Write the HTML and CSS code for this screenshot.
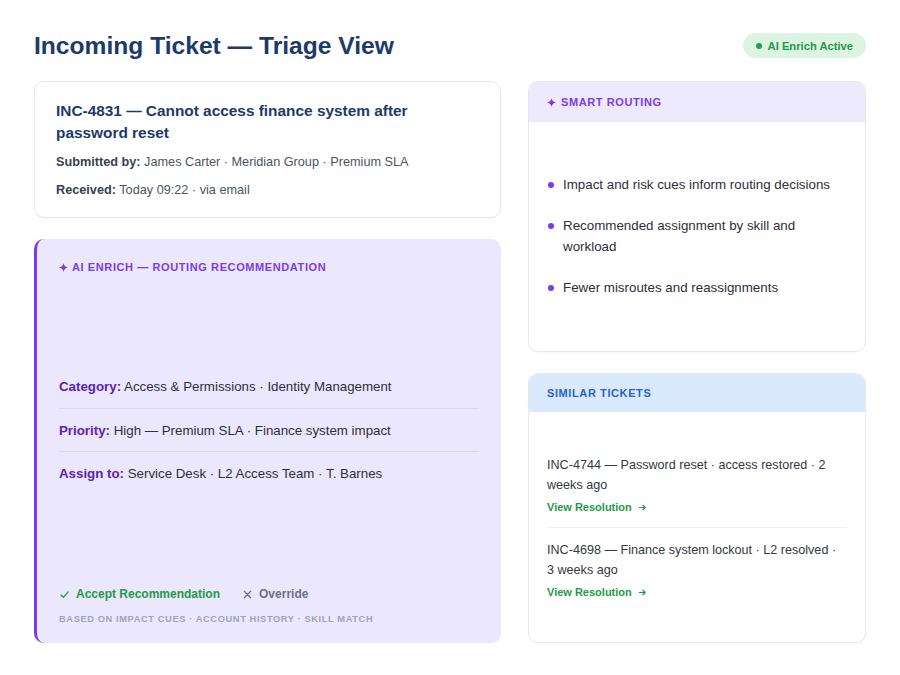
FILE: index.html
```html
<!DOCTYPE html>
<html lang="en">
<head>
    <meta charset="UTF-8">
    <meta name="viewport" content="width=device-width, initial-scale=1.0">
    <title>Incoming Ticket — Triage View</title>
    <link rel="stylesheet" href="styles.css">
</head>
<body>
    <div class="page">
        <header class="top">
            <h1>Incoming Ticket — Triage View</h1>
            <span class="badge"><span class="dot"></span>AI Enrich Active</span>
        </header>

        <div class="grid">
            <div class="col">
                <div class="card ticket">
                    <h2>INC-4831 — Cannot access finance system after password reset</h2>
                    <p class="meta"><strong>Submitted by:</strong> James Carter · Meridian Group · Premium SLA</p>
                    <p class="meta"><strong>Received:</strong> Today 09:22 · via email</p>
                </div>

                <div class="card enrich">
                    <div class="eyebrow purple">
                        <svg class="spark" viewBox="0 0 10 10"><path d="M5 0 Q5.6 4.4 10 5 Q5.6 5.6 5 10 Q4.4 5.6 0 5 Q4.4 4.4 5 0Z"/></svg>
                        AI Enrich — Routing Recommendation
                    </div>

                    <div class="rows">
                        <div class="row"><b>Category:</b> Access &amp; Permissions · Identity Management</div>
                        <div class="row"><b>Priority:</b> High — Premium SLA · Finance system impact</div>
                        <div class="row"><b>Assign to:</b> Service Desk · L2 Access Team · T. Barnes</div>
                    </div>

                    <div class="foot">
                        <div class="actions">
                            <span class="accept">
                                <svg viewBox="0 0 12 12"><path d="M2 6.5 L4.8 9 L10 3.2"/></svg>
                                Accept Recommendation
                            </span>
                            <span class="override">
                                <svg viewBox="0 0 12 12"><path d="M2.5 2.5 L9.5 9.5 M9.5 2.5 L2.5 9.5"/></svg>
                                Override
                            </span>
                        </div>
                        <div class="basis">Based on impact cues · account history · skill match</div>
                    </div>
                </div>
            </div>

            <div class="col">
                <div class="card side">
                    <div class="side-head routing">
                        <svg class="spark" viewBox="0 0 10 10"><path d="M5 0 Q5.6 4.4 10 5 Q5.6 5.6 5 10 Q4.4 5.6 0 5 Q4.4 4.4 5 0Z"/></svg>
                        Smart Routing
                    </div>
                    <div class="side-body">
                        <ul class="bullets">
                            <li>Impact and risk cues inform routing decisions</li>
                            <li>Recommended assignment by skill and workload</li>
                            <li>Fewer misroutes and reassignments</li>
                        </ul>
                    </div>
                </div>

                <div class="card side">
                    <div class="side-head similar">Similar Tickets</div>
                    <div class="side-body">
                        <div class="similar-list">
                            <div class="sim">
                                <p>INC-4744 — Password reset · access restored · 2 weeks ago</p>
                                <a class="view">View Resolution <svg viewBox="0 0 10 10"><path d="M1.5 5 H8 M5.5 2.5 L8 5 L5.5 7.5"/></svg></a>
                            </div>
                            <div class="sim">
                                <p>INC-4698 — Finance system lockout · L2 resolved · 3 weeks ago</p>
                                <a class="view">View Resolution <svg viewBox="0 0 10 10"><path d="M1.5 5 H8 M5.5 2.5 L8 5 L5.5 7.5"/></svg></a>
                            </div>
                        </div>
                    </div>
                </div>
            </div>
        </div>
    </div>
</body>
</html>
```

FILE: styles.css
```css
* {
    box-sizing: border-box;
}
body {
    margin: 0;
    font-family: "Liberation Sans", Arial, sans-serif;
    background: #ffffff;
    color: #374151;
}
.page {
    height: 675px;
    padding: 30px 34px 32px;
    display: flex;
    flex-direction: column;
}
.top {
    height: 31px;
    margin-bottom: 20px;
    display: flex;
    align-items: center;
    justify-content: space-between;
}
h1 {
    margin: 0;
    font-size: 24.6px;
    line-height: 31px;
    color: #1c3a6c;
    font-weight: 700;
}
.badge {
    display: inline-flex;
    align-items: center;
    gap: 6px;
    height: 25px;
    padding: 0 13px;
    border-radius: 13px;
    background: #dcf5e3;
    color: #1f9a46;
    font-size: 11.2px;
    font-weight: 700;
}
.dot {
    width: 6px;
    height: 6px;
    border-radius: 50%;
    background: #22a04b;
}
.grid {
    flex: 1;
    display: grid;
    grid-template-columns: 467px 1fr;
    column-gap: 27px;
}
.col {
    display: flex;
    flex-direction: column;
    gap: 21px;
}
.card {
    border: 1px solid #e6e8ec;
    border-radius: 10px;
    background: #fff;
    box-shadow: 0 1px 2px rgba(0,0,0,0.03);
}
.ticket {
    padding: 18px 21px 17px;
}
.ticket h2 {
    margin: 0 0 9px;
    font-size: 15.4px;
    line-height: 21.5px;
    color: #1c3a6c;
}
.meta {
    margin: 0;
    font-size: 12.7px;
    line-height: 20px;
    color: #4b5563;
}
.meta + .meta {
    margin-top: 8px;
}
.meta strong {
    color: #374151;
}
.enrich {
    flex: 1;
    border: none;
    border-left: 3px solid #7c3aed;
    background: #ebe7fd;
    padding: 21px 22px 17px;
    display: flex;
    flex-direction: column;
    justify-content: space-between;
}
.eyebrow {
    font-size: 11px;
    line-height: 14px;
    font-weight: 700;
    letter-spacing: 0.6px;
    text-transform: uppercase;
    display: flex;
    align-items: center;
    gap: 4px;
}
.purple {
    color: #7c3aed;
}
.spark {
    width: 9px;
    height: 9px;
    fill: currentColor;
}
.rows {
    margin-top: 1px;
}
.row {
    padding: 11px 0 10.5px;
    font-size: 13.3px;
    line-height: 21px;
    color: #2d2f3a;
}
.row + .row {
    border-top: 1px solid #dcd6f2;
}
.row b {
    color: #5b21b6;
}
.actions {
    display: flex;
    align-items: center;
    gap: 22px;
    font-size: 12px;
    font-weight: 700;
    line-height: 18px;
}
.actions span {
    display: inline-flex;
    align-items: center;
    gap: 6px;
}
.actions svg {
    width: 11px;
    height: 11px;
    fill: none;
    stroke: currentColor;
    stroke-width: 1.4;
    stroke-linecap: round;
    stroke-linejoin: round;
}
.accept {
    color: #1f9a46;
}
.override {
    color: #6b7280;
}
.basis {
    margin-top: 9px;
    font-size: 9.3px;
    line-height: 14px;
    font-weight: 700;
    letter-spacing: 0.6px;
    text-transform: uppercase;
    color: #a1a4b2;
}
.side {
    flex: 1;
    display: flex;
    flex-direction: column;
    overflow: hidden;
}
.side-head {
    height: 40px;
    padding: 0 18px;
    display: flex;
    align-items: center;
    gap: 5px;
    font-size: 11px;
    font-weight: 700;
    letter-spacing: 0.6px;
    text-transform: uppercase;
}
.side-head.routing {
    background: #ede9fe;
    color: #7c3aed;
}
.side-head.similar {
    height: 38px;
    background: #dbe9fd;
    color: #2563c9;
}
.side-body {
    flex: 1;
    padding: 0 18px;
    display: flex;
    flex-direction: column;
    justify-content: center;
}
.bullets {
    list-style: none;
    margin: 0;
    padding: 0;
}
.bullets li {
    position: relative;
    padding-left: 16px;
    font-size: 13.35px;
    line-height: 21px;
    color: #2d2f3a;
}
.bullets li + li {
    margin-top: 20px;
}
.bullets li::before {
    content: "";
    position: absolute;
    left: 1px;
    top: 8px;
    width: 6px;
    height: 6px;
    border-radius: 50%;
    background: #7c3aed;
}
.similar-list {
    margin-top: 2px;
}
.sim {
    padding: 12px 0;
}
.sim + .sim {
    border-top: 1px solid #eceef1;
}
.sim p {
    margin: 0;
    padding-right: 4px;
    font-size: 12.6px;
    line-height: 20px;
    color: #333842;
}
.view {
    display: inline-flex;
    align-items: center;
    gap: 6px;
    margin-top: 4px;
    font-size: 11px;
    line-height: 16px;
    font-weight: 700;
    color: #1f9a46;
}
.view svg {
    width: 9px;
    height: 9px;
    fill: none;
    stroke: currentColor;
    stroke-width: 1.3;
    stroke-linecap: round;
    stroke-linejoin: round;
}
```
